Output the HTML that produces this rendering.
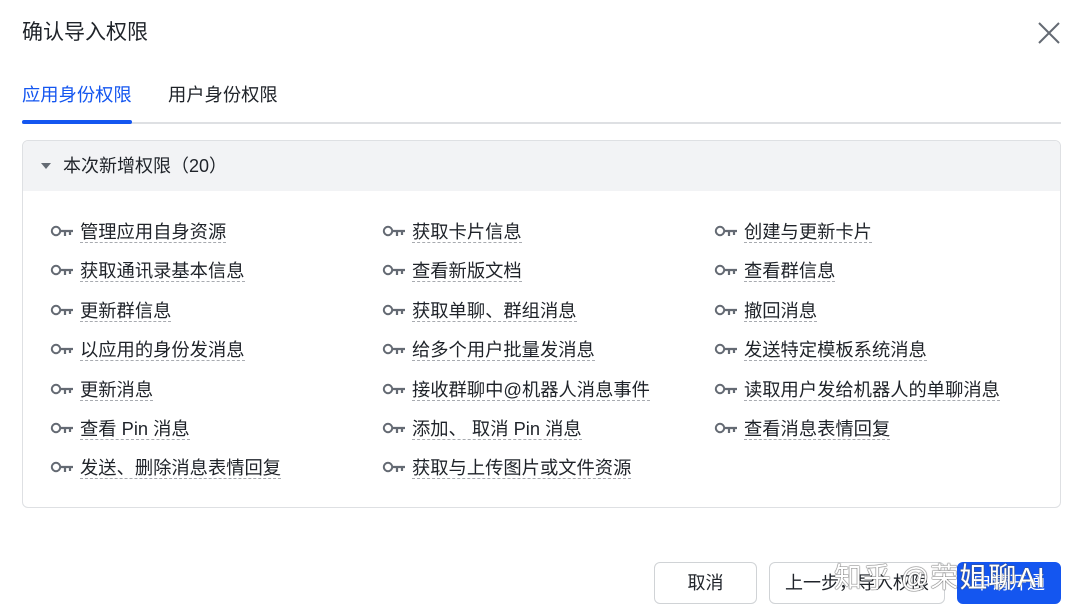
<!DOCTYPE html>
<html><head><meta charset="utf-8"><style>
*{margin:0;padding:0;box-sizing:border-box}
body{width:1080px;height:616px;background:#fff;font-family:"Liberation Sans","Noto Sans CJK SC",sans-serif;color:#1f2329;position:relative;overflow:hidden}
.title{position:absolute;left:22px;top:20px;font-size:21px;line-height:26px}
.close{position:absolute;left:1036px;top:20px}
.tab{position:absolute;top:83px;font-size:18.3px;line-height:24px}
.t1{left:22px;color:#1456f0}
.t2{left:168px;color:#1f2329}
.line{position:absolute;left:22px;top:122px;width:1039px;height:2px;background:#dee0e3}
.ul{position:absolute;left:22px;top:120px;width:110px;height:4px;border-radius:2px;background:#1456f0}
.panel{position:absolute;left:22px;top:140px;width:1039px;height:368px;border:1px solid #dee0e3;border-radius:6px;overflow:hidden}
.ph{height:50px;background:#f2f3f5;font-size:18px;line-height:50px;padding-left:40px;position:relative}
.ph:before{content:"";position:absolute;left:18px;top:22px;border-left:5px solid transparent;border-right:5px solid transparent;border-top:6px solid #646a73}
.item{position:absolute;font-size:18.3px;line-height:24px;white-space:nowrap}
.item svg{position:absolute;left:-30px;top:5px}
.item span{border-bottom:1px dashed #a8abb0}
.btn{position:absolute;top:562px;height:42px;border:1px solid #d0d3d6;border-radius:6px;font-size:18px;line-height:40px;text-align:center;background:#fff}
.wm{position:absolute;left:834px;top:556px;font-size:28px;color:#fff;text-shadow:0 0 1px #555,0 0 1px #555,0 0 1px #555;letter-spacing:1px}
</style></head><body>
<div class="title">确认导入权限</div>
<svg class="close" width="26" height="26" viewBox="0 0 26 26"><path d="M3 3L23 23M23 3L3 23" stroke="#646a73" stroke-width="2"/></svg>
<div class="tab t1">应用身份权限</div>
<div class="tab t2">用户身份权限</div>
<div class="line"></div><div class="ul"></div>
<div class="panel"><div class="ph">本次新增权限（20）</div></div>
<div id="items"></div>
<script>
var cols=[80,412,744],rows=[220,259,299,338,378,417,456];
var d=[["管理应用自身资源","获取卡片信息","创建与更新卡片"],["获取通讯录基本信息","查看新版文档","查看群信息"],["更新群信息","获取单聊、群组消息","撤回消息"],["以应用的身份发消息","给多个用户批量发消息","发送特定模板系统消息"],["更新消息","接收群聊中@机器人消息事件","读取用户发给机器人的单聊消息"],["查看 Pin 消息","添加、 取消 Pin 消息","查看消息表情回复"],["发送、删除消息表情回复","获取与上传图片或文件资源",""]];
var key='<svg width="24" height="14" viewBox="0 0 24 14"><circle cx="6" cy="6" r="4.2" fill="none" stroke="#646a73" stroke-width="2"/><path d="M10 6H23M15 6V11M20 6V10" stroke="#646a73" stroke-width="2.2"/></svg>';
var h='';for(var r=0;r<7;r++)for(var c=0;c<3;c++){if(!d[r][c])continue;h+='<div class="item" style="left:'+cols[c]+'px;top:'+rows[r]+'px">'+key+'<span>'+d[r][c]+'</span></div>';}
document.getElementById('items').innerHTML=h;
</script>
<div class="btn" style="left:654px;width:103px">取消</div>
<div class="btn" style="left:769px;width:176px">上一步，导入权限</div>
<div class="btn" style="left:957px;width:104px;background:#1456f0;border-color:#1456f0;color:#fff">申请开通</div>
<div class="wm">知乎 @荣姐聊AI</div>
</body></html>
